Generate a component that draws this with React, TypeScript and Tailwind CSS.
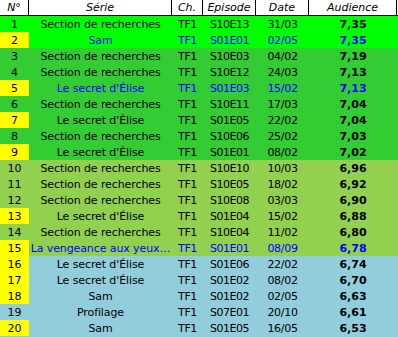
import React from 'react';

type Row = {
  n: number;
  serie: string;
  ep: string;
  date: string;
  aud: string;
  bg: string;
  yellow?: boolean;
  blue?: boolean;
};

const rows: Row[] = [
  { n: 1, serie: 'Section de recherches', ep: 'S10E13', date: '31/03', aud: '7,35', bg: 'bg-[#00ff00]' },
  { n: 2, serie: 'Sam', ep: 'S01E01', date: '02/05', aud: '7,35', bg: 'bg-[#00ff00]', yellow: true, blue: true },
  { n: 3, serie: 'Section de recherches', ep: 'S10E03', date: '04/02', aud: '7,19', bg: 'bg-[#33cc33]' },
  { n: 4, serie: 'Section de recherches', ep: 'S10E12', date: '24/03', aud: '7,13', bg: 'bg-[#33cc33]' },
  { n: 5, serie: "Le secret d'Élise", ep: 'S01E03', date: '15/02', aud: '7,13', bg: 'bg-[#33cc33]', yellow: true, blue: true },
  { n: 6, serie: 'Section de recherches', ep: 'S10E11', date: '17/03', aud: '7,04', bg: 'bg-[#33cc33]' },
  { n: 7, serie: "Le secret d'Élise", ep: 'S01E05', date: '22/02', aud: '7,04', bg: 'bg-[#33cc33]', yellow: true },
  { n: 8, serie: 'Section de recherches', ep: 'S10E06', date: '25/02', aud: '7,03', bg: 'bg-[#33cc33]' },
  { n: 9, serie: "Le secret d'Élise", ep: 'S01E01', date: '08/02', aud: '7,02', bg: 'bg-[#33cc33]', yellow: true },
  { n: 10, serie: 'Section de recherches', ep: 'S10E10', date: '10/03', aud: '6,96', bg: 'bg-[#92d050]' },
  { n: 11, serie: 'Section de recherches', ep: 'S10E05', date: '18/02', aud: '6,92', bg: 'bg-[#92d050]' },
  { n: 12, serie: 'Section de recherches', ep: 'S10E08', date: '03/03', aud: '6,90', bg: 'bg-[#92d050]' },
  { n: 13, serie: "Le secret d'Élise", ep: 'S01E04', date: '15/02', aud: '6,88', bg: 'bg-[#92d050]', yellow: true },
  { n: 14, serie: 'Section de recherches', ep: 'S10E04', date: '11/02', aud: '6,80', bg: 'bg-[#92d050]' },
  { n: 15, serie: 'La vengeance aux yeux…', ep: 'S01E01', date: '08/09', aud: '6,78', bg: 'bg-[#92d050]', yellow: true, blue: true },
  { n: 16, serie: "Le secret d'Élise", ep: 'S01E06', date: '22/02', aud: '6,74', bg: 'bg-[#92cddc]', yellow: true },
  { n: 17, serie: "Le secret d'Élise", ep: 'S01E02', date: '08/02', aud: '6,70', bg: 'bg-[#92cddc]', yellow: true },
  { n: 18, serie: 'Sam', ep: 'S01E02', date: '02/05', aud: '6,63', bg: 'bg-[#92cddc]', yellow: true },
  { n: 19, serie: 'Profilage', ep: 'S07E01', date: '20/10', aud: '6,61', bg: 'bg-[#92cddc]' },
  { n: 20, serie: 'Sam', ep: 'S01E05', date: '16/05', aud: '6,53', bg: 'bg-[#92cddc]', yellow: true },
];

const cols = 'grid grid-cols-[29px_143px_31px_53px_53px_88px]';

export default function App() {
  return (
    <div className="w-[398px] h-[337px] overflow-hidden bg-[#92cddc] font-['DejaVu_Sans',Verdana,sans-serif] text-[11px] leading-none text-black">
      {/* Header */}
      <div className="bg-white">
        <div className={`${cols} h-[16px] border-b border-black italic`}>
          {['N°', 'Série', 'Ch.', 'Episode', 'Date', 'Audience'].map((h) => (
            <div key={h} className="flex items-center justify-center border-r border-black whitespace-nowrap">
              {h}
            </div>
          ))}
        </div>
      </div>

      {/* Rows */}
      {rows.map((r) => (
        <div key={r.n} className={`${cols} h-[16px] ${r.bg} ${r.blue ? 'text-[#0000ff]' : 'text-black'}`}>
          <div className={`flex items-center justify-center ${r.yellow ? 'bg-[#ffff00]' : ''}`}>
            <span className="text-black">{r.n}</span>
          </div>
          <div className="flex items-center justify-center whitespace-nowrap tracking-[-0.1px]">{r.serie}</div>
          <div className="flex items-center justify-center tracking-[-0.4px]">TF1</div>
          <div className="flex items-center justify-center tracking-[-0.5px]">{r.ep}</div>
          <div className="flex items-center justify-center tracking-[-0.3px]">{r.date}</div>
          <div className="flex items-center justify-center font-bold">{r.aud}</div>
        </div>
      ))}
    </div>
  );
}
